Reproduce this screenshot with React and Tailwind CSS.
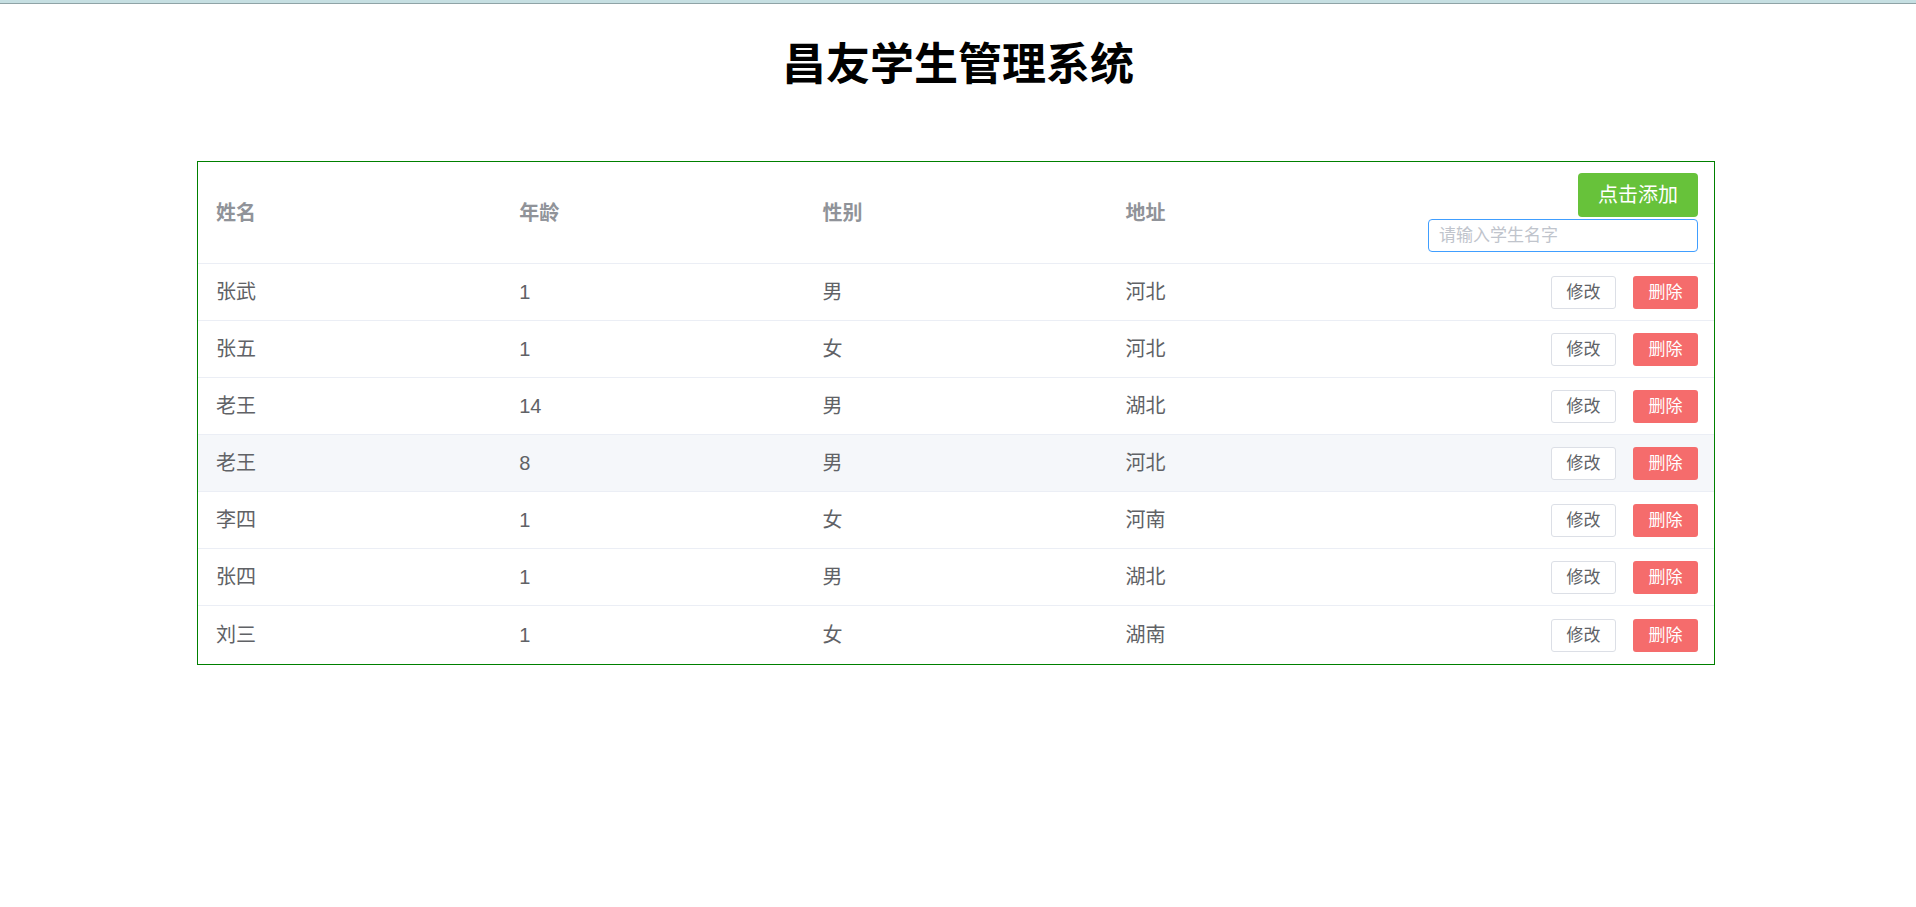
import React from "react";

const students = [
  { name: "张武", age: 1, sex: "男", addr: "河北" },
  { name: "张五", age: 1, sex: "女", addr: "河北" },
  { name: "老王", age: 14, sex: "男", addr: "湖北" },
  { name: "老王", age: 8, sex: "男", addr: "河北" },
  { name: "李四", age: 1, sex: "女", addr: "河南" },
  { name: "张四", age: 1, sex: "男", addr: "湖北" },
  { name: "刘三", age: 1, sex: "女", addr: "湖南" },
];

function Row({ s, last, hover }) {
  return (
    <div
      className={
        "grid grid-cols-5 items-center text-[20px] text-[#606266] " +
        (last ? "h-[58px] " : "h-[57px] border-b border-[#ebeef5] ") +
        (hover ? "bg-[#f5f7fa]" : "bg-white")
      }
    >
      <div className="pl-[18px]">{s.name}</div>
      <div className="pl-[18px]">{s.age}</div>
      <div className="pl-[18px]">{s.sex}</div>
      <div className="pl-[18px]">{s.addr}</div>
      <div className="flex justify-end gap-[17px] pr-[16px]">
        <button className="w-[65px] h-[33px] border border-[#dcdfe6] rounded-[3px] bg-white text-[17px] text-[#606266] leading-none">
          修改
        </button>
        <button className="w-[65px] h-[33px] rounded-[3px] bg-[#f56c6c] text-[17px] text-white leading-none">
          删除
        </button>
      </div>
    </div>
  );
}

export default function App() {
  return (
    <div
      className="min-h-screen bg-white"
      style={{ fontFamily: '"Liberation Sans", "Noto Sans CJK SC", sans-serif' }}
    >
      <div className="h-[4px] bg-[#c6dfe2] border-b border-[#8fa3a6]" />
      <h1 className="mt-[39px] text-center text-[44px] leading-[44px] font-bold text-black">
        昌友学生管理系统
      </h1>

      <div className="mt-[74px] ml-[197px] w-[1518px] border border-[#008000]">
        <div className="grid grid-cols-5 items-center h-[102px] border-b border-[#ebeef5] text-[20px] font-bold text-[#909399]">
          <div className="pl-[18px]">姓名</div>
          <div className="pl-[18px]">年龄</div>
          <div className="pl-[18px]">性别</div>
          <div className="pl-[18px]">地址</div>
          <div className="flex flex-col items-end gap-[2px] pr-[16px]">
            <button className="w-[120px] h-[44px] rounded-[4px] bg-[#67c23a] text-white text-[20px] font-normal leading-none">
              点击添加
            </button>
            <input
              autoFocus
              className="w-[270px] h-[33px] border border-[#409eff] rounded-[4px] px-[10px] text-[17px] font-normal text-[#606266] placeholder:text-[#c0c4cc] outline-none"
              placeholder="请输入学生名字"
            />
          </div>
        </div>
        {students.map((s, i) => (
          <Row key={i} s={s} last={i === students.length - 1} hover={i === 3} />
        ))}
      </div>
    </div>
  );
}
